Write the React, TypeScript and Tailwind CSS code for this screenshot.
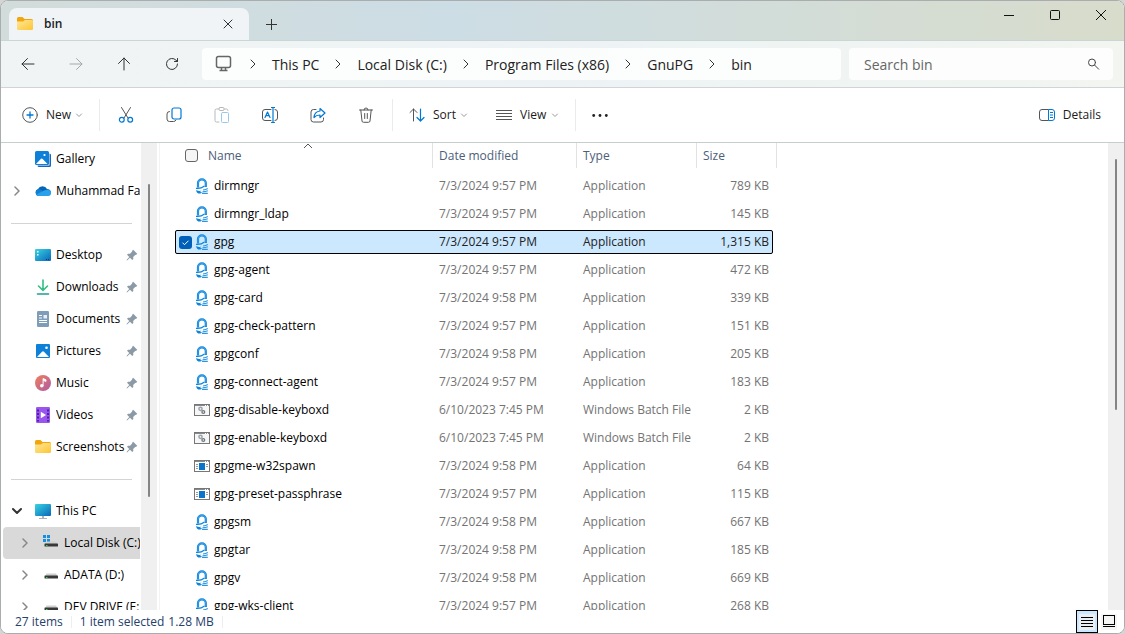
import type { ReactNode } from "react";

type IconProps = { className?: string };

function Chevron({ className = "" }: IconProps) {
  return (
    <svg className={`h-3 w-3 shrink-0 ${className}`} viewBox="0 0 12 12" fill="none" stroke="currentColor" strokeLinecap="round" strokeLinejoin="round">
      <path d="M4 2l4 4-4 4" />
    </svg>
  );
}

function ChevronDown() {
  return (
    <svg className="h-2 w-2 shrink-0 text-[#999]" viewBox="0 0 8 8" fill="none" stroke="currentColor" strokeLinecap="round" strokeLinejoin="round">
      <path d="M1.500 3L4 5.500 6.500 3" />
    </svg>
  );
}

function FolderIcon() {
  return (
    <svg className="h-4 w-4 shrink-0" viewBox="0 0 16 16">
      <path d="M0 2.500a1.500 1.500 0 011.500-1.500h4L7.500 3H14.500A1.500 1.500 0 0116 4.500V8H0z" fill="#f2a60d" />
      <path d="M0 5.500h6L8 4h6.700A1.300 1.300 0 0116 5.300v7.500a1.300 1.300 0 01-1.300 1.300H1.300A1.300 1.300 0 010 12.800z" fill="url(#folder)" />
      <defs>
        <linearGradient id="folder" x1="0" y1="0" x2="1" y2="1">
          <stop stopColor="#ffe69a" />
          <stop offset="1" stopColor="#fcc633" />
        </linearGradient>
      </defs>
    </svg>
  );
}

function GalleryIcon() {
  return (
    <svg className="h-4 w-4" viewBox="0 0 16 16">
      <path d="M14.500 2.500A1.500 1.500 0 0116 4v10.500a1.500 1.500 0 01-1.500 1.500H4a1.500 1.500 0 01-1.500-1.500h12z" fill="#1c62b9" />
      <rect width="14" height="14" rx="1.500" fill="#0f80d8" />
      <path d="M1 13l5-5.200a1 1 0 011.400 0L12.500 13z" fill="#fff" />
      <circle cx="9.500" cy="4" r="1.100" fill="#fff" />
    </svg>
  );
}

function OneDriveIcon() {
  return (
    <svg className="h-4 w-4" viewBox="0 0 16 16">
      <path d="M3.500 12.500A3.400 3.400 0 013 5.900 5 5 0 0112 6a4 4 0 014 3.500l-6 3z" fill="#0364b8" />
      <path d="M3.500 13A3.400 3.400 0 013.500 6.300c1.300 0 2 .3 3 1L12 11z" fill="#1180d4" />
      <path d="M1.200 11.800L9 7.600c2-1 3.400-.9 4.500-.6A3 3 0 0112.800 13H3.500c-1 0-1.800-.5-2.300-1.200z" fill="#28a0ea" />
    </svg>
  );
}

function DesktopIcon() {
  return (
    <svg className="h-4 w-4" viewBox="0 0 16 16">
      <rect y="2" width="16" height="12" rx="1" fill="url(#screen)" />
      <path d="M2 4h1.500v1.500H2zM2 7h1.500v1.500H2z" fill="#fff" />
      <path d="M11 12.500h1M13 12.500h1" stroke="#0a3f75" />
    </svg>
  );
}

function DownloadsIcon() {
  return (
    <svg className="h-4 w-4" viewBox="0 0 16 16" fill="none" strokeWidth="1.600" strokeLinecap="round" strokeLinejoin="round">
      <path d="M8 1v10M3.500 7L8 11.300 12.500 7" stroke="#35bd84" />
      <path d="M2.500 15h11" stroke="#1b9e95" />
    </svg>
  );
}

function DocumentsIcon() {
  return (
    <svg className="h-4 w-4" viewBox="0 0 16 16">
      <rect x="2" width="12" height="16" rx="1.200" fill="#7f9cb8" />
      <path d="M4 4.500h3M4 7h3M4 9.500h8M4 11.500h8" stroke="#fff" />
      <rect x="8.500" y="4" width="3.500" height="3.500" fill="#e8f0f7" />
    </svg>
  );
}

function PicturesIcon() {
  return (
    <svg className="h-4 w-4" viewBox="0 0 16 16">
      <rect x="1" y="1" width="14" height="14" rx="1" fill="#0f80d8" />
      <path d="M2 14l5-5.200a1.400 1.400 0 012 0l5 5.200z" fill="#fff" />
      <circle cx="11.500" cy="4.700" r="1.300" fill="#fff" />
    </svg>
  );
}

function MusicIcon() {
  return (
    <svg className="h-4 w-4" viewBox="0 0 16 16">
      <circle cx="8" cy="8" r="8" fill="url(#music)" />
      <circle cx="6.800" cy="10.800" r="1.800" fill="#fff" />
      <path d="M8 11V3.500l3 1.200v1.800L8.500 5.600" fill="#fff" stroke="#fff" strokeWidth=".8" />
      <defs>
        <linearGradient id="music" x1="0" y1="0" x2="1" y2="1">
          <stop stopColor="#f0805a" />
          <stop offset="1" stopColor="#ad5aa8" />
        </linearGradient>
      </defs>
    </svg>
  );
}

function VideosIcon() {
  return (
    <svg className="h-4 w-4" viewBox="0 0 16 16">
      <rect x="1" width="14" height="16" rx="1.300" fill="#9a55ee" />
      <path d="M3 2.500v12M13 2.500v12" stroke="#40218f" strokeWidth="1.800" strokeDasharray="2 1.500" />
      <path d="M5.800 4.700v6.600L11 8z" fill="#fff" />
    </svg>
  );
}

function ThisPcIcon() {
  return (
    <svg className="h-4 w-4" viewBox="0 0 16 16">
      <path d="M7 13h2v2h3v1H4v-1h3z" fill="#a8b4bd" />
      <rect y="1" width="16" height="12" rx="1" fill="url(#screen)" />
      <defs>
        <linearGradient id="screen" x1="0" y1="0" x2="1" y2="1">
          <stop stopColor="#36d5e4" />
          <stop offset="1" stopColor="#0a66b8" />
        </linearGradient>
      </defs>
    </svg>
  );
}

function DriveIcon({ system = false }: { system?: boolean }) {
  return (
    <svg className="h-4 w-4" viewBox="0 0 16 16">
      {system && <path d="M0 0h3v3H0zM4 0h3v3H4zM0 4h3v3H0zM4 4h3v3H4z" fill="#1590e0" />}
      <path d="M3.500 6.500h9.500l1.500 2.500h-12z" fill="#d0d0d0" />
      <rect x="1.500" y="8.500" width="13.500" height="3" rx=".6" fill="#383838" />
      <path d="M3 10.500h1.500" stroke="#39d353" />
    </svg>
  );
}

function PinIcon() {
  return (
    <svg className="h-3 w-3 shrink-0 text-[#8c9aa5]" viewBox="0 0 12 12">
      <path d="M7.200.8L11.200 4.800 10 6 9.400 5.800 7.200 8l.1 2-1 1L4 8.700 1 11.500.5 11 3.300 8 1 5.700l1-1 2 .1 2.200-2.200L6 2z" fill="currentColor" />
    </svg>
  );
}

function LockIcon() {
  return (
    <svg className="h-4 w-4" viewBox="0 0 16 16" fill="none">
      <path d="M4 9.500V5.200a3.900 3.900 0 017.800 0V9" stroke="#0b84dc" strokeWidth="2.200" />
      <path d="M4 9V5.200a3.900 3.900 0 017.800 0V8.500" stroke="#6fbdf3" strokeWidth=".5" />
      <path d="M2 10.300c3 .3 6-.3 8.500-2.300" stroke="#0b84dc" strokeWidth="1.200" />
      <path d="M2.200 12c2.300 1.200 4 1 5.300.8L5.800 14l2.400.3-1.700 1.200c-2 .4-4.300-.5-4.300-3.500z" fill="#0b84dc" />
      <path d="M9 12c2-.2 3.500-.7 4.800-1.500M8.500 13.800c2 0 3.800-.4 5.300-1M8 15.400h5.800" stroke="#2b95e2" strokeWidth="1.100" />
    </svg>
  );
}

function BatchIcon() {
  return (
    <svg className="h-4 w-4" viewBox="0 0 16 16" fill="none">
      <rect x=".5" y="2.500" width="15" height="11" fill="#f7f7f7" stroke="#777" />
      <path d="M1 3.500h14" stroke="#888" />
      <path d="M11 3.500h1M13 3.500h1" stroke="#fff" />
      <circle cx="6.500" cy="6.800" r="1.600" stroke="#9aa4ac" strokeWidth="1.500" />
      <circle cx="9.300" cy="10" r="1.400" stroke="#6d7982" strokeWidth="1.300" />
    </svg>
  );
}

function ConsoleIcon() {
  return (
    <svg className="h-4 w-4" viewBox="0 0 16 16" fill="none">
      <rect x=".5" y="2.500" width="15" height="11" fill="#fff" stroke="#777" />
      <path d="M1 3.500h14" stroke="#888" />
      <path d="M11 3.500h1M13 3.500h1" stroke="#fff" />
      <path d="M2 6.500h2M2 8.500h2M2 10.500h2M12 6.500h2M12 8.500h2" stroke="#999" />
      <rect x="5" y="5" width="6" height="7" fill="#0a74cc" />
    </svg>
  );
}

const fileIcons = { lock: LockIcon, batch: BatchIcon, console: ConsoleIcon };

type FileRow = {
  name: string;
  date: string;
  type: string;
  size: string;
  icon: keyof typeof fileIcons;
  selected?: boolean;
};

const files: FileRow[] = [
  { name: "dirmngr", date: "7/3/2024 9:57 PM", type: "Application", size: "789 KB", icon: "lock" },
  { name: "dirmngr_ldap", date: "7/3/2024 9:57 PM", type: "Application", size: "145 KB", icon: "lock" },
  { name: "gpg", date: "7/3/2024 9:57 PM", type: "Application", size: "1,315 KB", icon: "lock", selected: true },
  { name: "gpg-agent", date: "7/3/2024 9:57 PM", type: "Application", size: "472 KB", icon: "lock" },
  { name: "gpg-card", date: "7/3/2024 9:58 PM", type: "Application", size: "339 KB", icon: "lock" },
  { name: "gpg-check-pattern", date: "7/3/2024 9:57 PM", type: "Application", size: "151 KB", icon: "lock" },
  { name: "gpgconf", date: "7/3/2024 9:58 PM", type: "Application", size: "205 KB", icon: "lock" },
  { name: "gpg-connect-agent", date: "7/3/2024 9:57 PM", type: "Application", size: "183 KB", icon: "lock" },
  { name: "gpg-disable-keyboxd", date: "6/10/2023 7:45 PM", type: "Windows Batch File", size: "2 KB", icon: "batch" },
  { name: "gpg-enable-keyboxd", date: "6/10/2023 7:45 PM", type: "Windows Batch File", size: "2 KB", icon: "batch" },
  { name: "gpgme-w32spawn", date: "7/3/2024 9:58 PM", type: "Application", size: "64 KB", icon: "console" },
  { name: "gpg-preset-passphrase", date: "7/3/2024 9:57 PM", type: "Application", size: "115 KB", icon: "console" },
  { name: "gpgsm", date: "7/3/2024 9:58 PM", type: "Application", size: "667 KB", icon: "lock" },
  { name: "gpgtar", date: "7/3/2024 9:58 PM", type: "Application", size: "185 KB", icon: "lock" },
  { name: "gpgv", date: "7/3/2024 9:58 PM", type: "Application", size: "669 KB", icon: "lock" },
  { name: "gpg-wks-client", date: "7/3/2024 9:57 PM", type: "Application", size: "268 KB", icon: "lock" },
];

const quickAccess = [
  { label: "Desktop", icon: <DesktopIcon /> },
  { label: "Downloads", icon: <DownloadsIcon /> },
  { label: "Documents", icon: <DocumentsIcon /> },
  { label: "Pictures", icon: <PicturesIcon /> },
  { label: "Music", icon: <MusicIcon /> },
  { label: "Videos", icon: <VideosIcon /> },
  { label: "Screenshots", icon: <FolderIcon /> },
];

const crumbs = ["This PC", "Local Disk (C:)", "Program Files (x86)", "GnuPG", "bin"];

function TitleBar() {
  return (
    <header className="flex h-10 shrink-0 items-end border-b border-[#c9d6d6] bg-linear-to-r from-[#d2dcda] via-[#cddde5] via-40% to-[#d8dccb]">
      <div className="ml-2 flex h-8 w-60 items-center rounded-t-lg bg-[#f0f4f7] pr-[11px] pl-2">
        <FolderIcon />
        <span className="ml-[11px] flex-1 text-[12px] font-semibold text-[#1b1b1b]">bin</span>
        <button aria-label="Close tab" className="flex h-5 w-5 items-center justify-center">
          <svg className="h-3 w-3" viewBox="0 0 12 12" fill="none" stroke="#333" strokeLinecap="round">
            <path d="M2 2l8 8M10 2l-8 8" />
          </svg>
        </button>
      </div>
      <button aria-label="New tab" className="ml-3 flex h-8 w-5 items-center justify-center">
        <svg className="h-3 w-3" viewBox="0 0 12 12" fill="none" stroke="#333">
          <path d="M6.500 1v11M1 6.500h11" />
        </svg>
      </button>
      <div className="mr-px ml-auto flex h-full items-start">
        <button aria-label="Minimize" className="flex h-7 w-11 items-center justify-center">
          <svg className="h-3 w-3" viewBox="0 0 12 12" stroke="#111">
            <path d="M1 6.500h10" />
          </svg>
        </button>
        <button aria-label="Maximize" className="flex h-7 w-12 items-center justify-center">
          <svg className="h-3 w-3" viewBox="0 0 12 12" fill="none" stroke="#111">
            <rect x="1.500" y="1.500" width="9" height="9" rx="1" />
          </svg>
        </button>
        <button aria-label="Close" className="flex h-7 w-11 items-center justify-center">
          <svg className="h-3 w-3" viewBox="0 0 12 12" fill="none" stroke="#111">
            <path d="M1 1l10 10M11 1L1 11" />
          </svg>
        </button>
      </div>
    </header>
  );
}

function NavButton({ label, children, disabled = false }: { label: string; children: ReactNode; disabled?: boolean }) {
  return (
    <button aria-label={label} disabled={disabled} className="flex h-8 w-12 items-center justify-center text-[#333] disabled:text-[#a5a8aa]">
      <svg className="h-4 w-4" viewBox="0 0 16 16" fill="none" stroke="currentColor" strokeLinecap="round" strokeLinejoin="round">
        {children}
      </svg>
    </button>
  );
}

function AddressRow() {
  return (
    <div className="flex h-[47px] shrink-0 items-center border-b border-[#cdd5d8] bg-linear-to-r from-[#f1f4f4] via-[#edf3f5] via-50% to-[#f2f5f0] pr-[11px] pl-[3px]">
      <NavButton label="Back">
        <path d="M2 8h12M7.500 2.500L2 8l5.500 5.500" />
      </NavButton>
      <NavButton label="Forward" disabled>
        <path d="M14 8H2M8.500 2.500L14 8l-5.500 5.500" />
      </NavButton>
      <NavButton label="Up">
        <path d="M8 14V2M2.500 7.500L8 2l5.500 5.500" />
      </NavButton>
      <NavButton label="Refresh">
        <path d="M13.500 8A5.500 5.500 0 1112 4.200L13.500 5.500M13.500 2.500v3h-3" />
      </NavButton>
      <nav aria-label="Address" className="ml-1.5 flex h-8 flex-1 items-center rounded bg-white/80 pl-3 text-[14px] text-[#222]">
        <svg className="h-5 w-5 shrink-0" viewBox="0 0 20 20" fill="none" stroke="#666" strokeWidth="1.500">
          <rect x="2.500" y="2.500" width="14" height="11" rx="2" />
          <path d="M5.500 16.500h8M7.500 14v2M11.500 14v2" />
        </svg>
        {crumbs.map((crumb) => (
          <span key={crumb} className="flex items-center">
            <Chevron className="mx-[13px] text-[#333]" />
            <a href="#" className="whitespace-nowrap">
              {crumb}
            </a>
          </span>
        ))}
      </nav>
      <label className="ml-2 flex h-8 w-66 items-center rounded bg-white/80 pr-3 pl-[15px]">
        <input type="text" placeholder="Search bin" aria-label="Search bin" className="min-w-0 flex-1 bg-transparent text-[14px] outline-none placeholder:text-[#666]" />
        <svg className="h-4 w-4" viewBox="0 0 16 16" fill="none" stroke="#444" strokeLinecap="round">
          <circle cx="7" cy="6.500" r="3.500" />
          <path d="M9.700 9.200l4 4" />
        </svg>
      </label>
    </div>
  );
}

function ToolButton({ label, children, disabled = false }: { label: string; children: ReactNode; disabled?: boolean }) {
  return (
    <button aria-label={label} disabled={disabled} className="flex h-8 w-12 items-center justify-center text-[#555] disabled:opacity-40">
      <svg className="h-4 w-4" viewBox="0 0 16 16" fill="none" stroke="currentColor" strokeLinecap="round" strokeLinejoin="round">
        {children}
      </svg>
    </button>
  );
}

function Toolbar() {
  return (
    <div className="flex h-[55px] shrink-0 items-center border-b border-[#c5d0ce] bg-white text-[12px] text-[#1b1b1b]">
      <button className="ml-[21px] flex h-8 w-[77px] items-center">
        <svg className="h-4 w-4" viewBox="0 0 16 16" fill="none" strokeLinecap="round">
          <circle cx="8" cy="8" r="7.300" stroke="#555" />
          <path d="M8 5v6M5 8h6" stroke="#0078d4" strokeWidth="1.300" />
        </svg>
        <span className="mr-1 ml-2">New</span>
        <ChevronDown />
      </button>
      <div className="h-8 w-px bg-[#ebebeb]" />
      <div className="ml-0.5 flex">
        <ToolButton label="Cut">
          <path d="M3.500.5l6.500 10.500M12.500.5L6 11" />
          <circle cx="3.800" cy="12.700" r="2.400" stroke="#0078d4" strokeWidth="1.200" />
          <circle cx="12.200" cy="12.700" r="2.400" stroke="#0078d4" strokeWidth="1.200" />
        </ToolButton>
        <ToolButton label="Copy">
          <path d="M3.500 4.500A2.500 2.500 0 001 7v5a2.500 2.500 0 002.500 2.500h4A2.500 2.500 0 0010 13" />
          <rect x="6" y="1" width="9" height="11" rx="2" stroke="#0078d4" strokeWidth="1.200" />
        </ToolButton>
        <ToolButton label="Paste" disabled>
          <path d="M5 2H2.500A1.500 1.500 0 001 3.500v10A1.500 1.500 0 002.500 15H5M10 2h2.500A1.500 1.500 0 0114 3.500" />
          <rect x="5" y=".5" width="5" height="3" rx="1" />
          <rect x="7.500" y="5.500" width="7" height="10" rx="1" stroke="#0078d4" />
        </ToolButton>
        <ToolButton label="Rename">
          <path d="M9 2.500H3A2.500 2.500 0 00.5 5v6A2.500 2.500 0 003 13.500h6M13 2.500A2.500 2.500 0 0115.500 5v6a2.500 2.500 0 01-2.500 2.500" />
          <path d="M3 10.500L5.500 5 8 10.500M4 8.700h3M11 .5v15M9.500.5h3M9.500 15.500h3" stroke="#0078d4" strokeWidth="1.200" />
        </ToolButton>
        <ToolButton label="Share">
          <path d="M6 2.500H3.500A2.500 2.500 0 001 5v7.500A2.500 2.500 0 003.500 15H11a2.500 2.500 0 002.500-2.500V11" />
          <path d="M10 1.500L15 6l-5 4.500V8c-3 0-4.500.7-6 2.500C4.300 6.800 6.500 4.300 10 4z" stroke="#0078d4" strokeWidth="1.200" />
        </ToolButton>
        <ToolButton label="Delete">
          <path d="M1.500 3h13M6 3a2 2 0 014 0M2.800 3L4 14a1.500 1.500 0 001.500 1.300h5A1.500 1.500 0 0012 14l1.200-11M6.700 6.500v5M9.300 6.500v5" />
        </ToolButton>
      </div>
      <div className="ml-0.5 h-8 w-px bg-[#ebebeb]" />
      <button className="ml-4 flex h-8 items-center">
        <svg className="h-4 w-4" viewBox="0 0 16 16" fill="none" strokeLinecap="round" strokeLinejoin="round">
          <path d="M4.500 14V2M1 5.500L4.500 2 8 5.500" stroke="#555" />
          <path d="M11.500 2v12M8 10.500l3.500 3.500L15 10.500" stroke="#0078d4" strokeWidth="1.200" />
        </svg>
        <span className="mr-1 ml-2">Sort</span>
        <ChevronDown />
      </button>
      <button className="ml-7 flex h-8 items-center">
        <svg className="h-4 w-4" viewBox="0 0 16 16" stroke="#555">
          <path d="M0 3.500h16M0 6.500h16M0 9.500h16M0 12.500h16" />
        </svg>
        <span className="mr-[5px] ml-2">View</span>
        <ChevronDown />
      </button>
      <div className="ml-4 h-8 w-px bg-[#ebebeb]" />
      <button aria-label="See more" className="ml-4 flex h-8 items-center">
        <svg className="h-4 w-4" viewBox="0 0 16 16" fill="#222">
          <circle cx="1.700" cy="8.500" r="1.400" />
          <circle cx="8" cy="8.500" r="1.400" />
          <circle cx="14.300" cy="8.500" r="1.400" />
        </svg>
      </button>
      <button className="mr-[23px] ml-auto flex h-8 items-center gap-2">
        <svg className="h-4 w-4" viewBox="0 0 16 16" fill="none">
          <path d="M9.500 2.500H3A2.500 2.500 0 00.5 5v6A2.500 2.500 0 003 13.500h6.500" stroke="#555" />
          <path d="M9.500 2.500H13A2.500 2.500 0 0115.500 5v6a2.500 2.500 0 01-2.500 2.500H9.500zM11 5.500h3M11 8h3M11 10.500h3" stroke="#0078d4" />
        </svg>
        Details
      </button>
    </div>
  );
}

type SideItemProps = {
  label: string;
  icon: ReactNode;
  expander?: "closed" | "open";
  nested?: boolean;
  pinned?: boolean;
  active?: boolean;
};

function SideItem({ label, icon, expander, nested, pinned, active }: SideItemProps) {
  return (
    <li>
      <a href="#" className={`ml-0.5 flex h-8 items-center rounded-l text-[12px] whitespace-nowrap text-black ${nested ? "pl-4" : "pl-2"} ${active ? "bg-[#d9d9d9]" : ""}`}>
        <span className="flex w-6 shrink-0 items-center">
          {expander && <Chevron className={expander === "open" ? "rotate-90 stroke-2 text-[#333]" : "stroke-[1.5] text-[#888]"} />}
        </span>
        <span className="shrink-0">{icon}</span>
        <span className="ml-[5px] min-w-0 flex-1 overflow-hidden">{label}</span>
        {pinned && (
          <span className="mr-0.5">
            <PinIcon />
          </span>
        )}
      </a>
    </li>
  );
}

function Divider() {
  return (
    <li className="flex h-8 items-center pr-2 pl-2.5" aria-hidden="true">
      <span className="h-px flex-1 bg-[#d4d4d4]" />
    </li>
  );
}

function Sidebar() {
  return (
    <aside className="flex w-[159px] shrink-0 border-r border-[#f3f3f3]">
      <ul className="w-[139px] overflow-hidden">
        <SideItem label="Gallery" icon={<GalleryIcon />} />
        <SideItem label="Muhammad Far" icon={<OneDriveIcon />} expander="closed" />
        <Divider />
        {quickAccess.map((item) => (
          <SideItem key={item.label} label={item.label} icon={item.icon} pinned />
        ))}
        <Divider />
        <SideItem label="This PC" icon={<ThisPcIcon />} expander="open" />
        <SideItem label="Local Disk (C:)" icon={<DriveIcon system />} expander="closed" nested active />
        <SideItem label="ADATA (D:)" icon={<DriveIcon />} expander="closed" nested />
        <SideItem label="DEV DRIVE (E:)" icon={<DriveIcon />} expander="closed" nested />
      </ul>
      <div className="ml-px flex w-4 justify-center bg-[#f0f0f0] pt-[41px]">
        <div className="h-[313px] w-0.5 rounded bg-[#858585]" />
      </div>
    </aside>
  );
}

function FileTable() {
  return (
    <table className="ml-[15px] block w-[602px] text-[12px]">
      <thead className="block">
        <tr className="grid h-[25px] grid-cols-[258px_144px_120px_80px] text-left text-[#4c607a]">
          <th className="relative flex items-center border-r border-[#e2e2e2] pl-2.5 font-normal">
            <input type="checkbox" aria-label="Select all" className="h-[13px] w-[13px] appearance-none rounded-[3px] border border-[#666] bg-[#f5f5f5]" />
            <span className="ml-2.5">Name</span>
            <svg className="absolute top-0 left-32 h-1.5 w-2.5" viewBox="0 0 10 6" fill="none" stroke="#555">
              <path d="M1 5l4-4 4 4" />
            </svg>
          </th>
          <th className="flex items-center border-r border-[#e2e2e2] pl-1.5 font-normal">Date modified</th>
          <th className="flex items-center border-r border-[#e2e2e2] pl-1.5 font-normal">Type</th>
          <th className="flex items-center border-r border-[#e2e2e2] pl-1.5 font-normal">Size</th>
        </tr>
      </thead>
      <tbody className="block pt-0.5">
        {files.map((file) => {
          const Icon = fileIcons[file.icon];
          return (
            <tr
              key={file.name}
              className={`my-1 mr-1 grid h-6 grid-cols-[258px_144px_120px_1fr] items-center ${
                file.selected ? "rounded-xs bg-[#cce8ff] text-[#222] outline -outline-offset-1 outline-black" : "text-[#737373]"
              }`}
            >
              <td className="flex items-center text-black">
                <span className="flex w-[19px] justify-end pr-0.5">
                  {file.selected && (
                    <span className="relative flex">
                      <input type="checkbox" defaultChecked aria-label={`Select ${file.name}`} className="h-[13px] w-[13px] appearance-none rounded-[3px] bg-[#005fb8]" />
                      <svg className="pointer-events-none absolute inset-0 h-[13px] w-[13px]" viewBox="0 0 13 13" fill="none" stroke="#fff">
                        <path d="M3.500 6.700l2 2 4-4" />
                      </svg>
                    </span>
                  )}
                </span>
                <Icon />
                <span className="ml-1">{file.name}</span>
              </td>
              <td className="pl-1.5">{file.date}</td>
              <td className="pl-1.5">{file.type}</td>
              <td className="pr-1 text-right">{file.size}</td>
            </tr>
          );
        })}
      </tbody>
    </table>
  );
}

function StatusBar() {
  return (
    <footer className="flex h-[23px] shrink-0 items-center bg-white pr-[7px] pl-3.5 text-[12px] text-[#24406b]">
      <span>27 items</span>
      <span className="mx-2 h-3 w-px bg-[#eee]" />
      <span>1 item selected</span>
      <span className="ml-1">1.28 MB</span>
      <span className="ml-2 h-3 w-px bg-[#eee]" />
      <button aria-label="Details view" className="ml-auto flex h-[23px] w-[22px] items-center justify-center border border-black bg-[#cce8ff]">
        <svg className="h-4 w-4 bg-[#e9eff3]" viewBox="0 0 16 16" stroke="#000">
          <path d="M2 3.500h12M2 6.500h12M2 9.500h12M2 12.500h12" />
        </svg>
      </button>
      <button aria-label="Large icons view" className="ml-[3px] flex h-[23px] w-4 items-center justify-center">
        <svg className="h-4 w-4 bg-[#f5f5f5]" viewBox="0 0 16 16" fill="none" stroke="#000">
          <rect x="2.500" y="1.500" width="11" height="9" />
          <path d="M2 12.500h12" />
        </svg>
      </button>
    </footer>
  );
}

export default function App() {
  return (
    <div className="h-screen bg-[#d5d5d5] font-['Open_Sans','Noto_Sans',sans-serif]">
      <div className="flex h-full flex-col overflow-hidden rounded-lg border border-[#a9adad] bg-white">
        <TitleBar />
        <AddressRow />
        <Toolbar />
        <main className="flex min-h-0 flex-1 overflow-hidden">
          <Sidebar />
          <section className="min-w-0 flex-1 overflow-hidden">
            <FileTable />
          </section>
          <div className="flex w-4 shrink-0 justify-center bg-[#f0f0f0] pt-4">
            <div className="h-[251px] w-0.5 rounded bg-[#858585]" />
          </div>
        </main>
        <StatusBar />
      </div>
    </div>
  );
}
